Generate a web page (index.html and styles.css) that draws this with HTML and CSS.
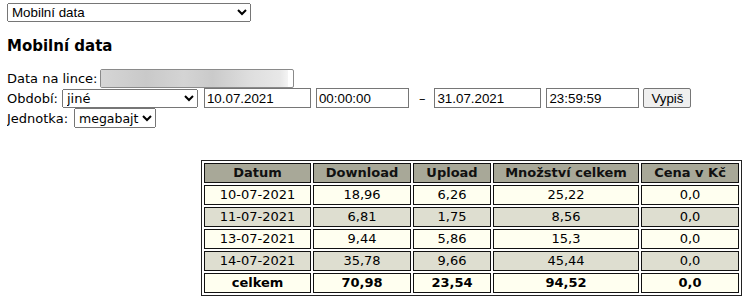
FILE: index.html
```html
<!DOCTYPE html>
<html lang="cs">
<head>
<meta charset="utf-8">
<title>Mobilní data</title>
<link rel="stylesheet" href="styles.css">
</head>
<body>
<select class="nav-select"><option>Mobilní data</option></select>
<h3 class="title">Mobilní data</h3>
<div class="row">
  <span class="label">Data na lince:</span>
  <span class="field-blur"><span class="blur"></span></span>
</div>
<div class="row">
  <span class="label">Období:</span>
  <select class="sel period"><option>jiné</option></select>
  <input class="inp date first" value="10.07.2021">
  <input class="inp time" value="00:00:00">
  <span class="dash">–</span>
  <input class="inp date" value="31.07.2021">
  <input class="inp time" value="23:59:59">
  <button class="btn">Vypiš</button>
</div>
<div class="row">
  <span class="label">Jednotka:</span>
  <select class="sel unit"><option>megabajt</option></select>
</div>
<table class="data">
  <thead>
    <tr><th class="c1">Datum</th><th class="c2">Download</th><th class="c3">Upload</th><th class="c4">Množství celkem</th><th class="c5">Cena v Kč</th></tr>
  </thead>
  <tbody>
    <tr class="odd"><td>10-07-2021</td><td>18,96</td><td>6,26</td><td>25,22</td><td>0,0</td></tr>
    <tr class="even"><td>11-07-2021</td><td>6,81</td><td>1,75</td><td>8,56</td><td>0,0</td></tr>
    <tr class="odd"><td>13-07-2021</td><td>9,44</td><td>5,86</td><td>15,3</td><td>0,0</td></tr>
    <tr class="even"><td>14-07-2021</td><td>35,78</td><td>9,66</td><td>45,44</td><td>0,0</td></tr>
    <tr class="odd total"><td>celkem</td><td>70,98</td><td>23,54</td><td>94,52</td><td>0,0</td></tr>
  </tbody>
</table>
</body>
</html>
```
FILE: styles.css
```css
html, body { background: #fff; }
body {
  margin: 3px 7px 0 7px;
  font-family: "DejaVu Sans", Verdana, sans-serif;
  font-size: 13px;
  color: #000;
}
.nav-select {
  display: block;
  width: 244px;
  height: 19px;
  font-family: "Liberation Sans", Arial, sans-serif;
  font-size: 13.33px;
  margin: 0;
}
.title {
  font-size: 15px;
  line-height: 18px;
  font-weight: bold;
  margin: 15px 0 13px 0;
}
.row {
  display: flex;
  align-items: center;
  height: 20px;
}
.label { margin-right: 4px; white-space: nowrap; }
.field-blur {
  display: block;
  width: 194px;
  height: 19px;
  box-sizing: border-box;
  border: 1px solid #8a8a8a;
  border-radius: 2px;
  background: #fff;
  position: relative;
  overflow: hidden;
  margin-left: -2px;
}
.blur {
  position: absolute;
  left: -2px; top: -2px; bottom: 0; right: 5px;
  background: linear-gradient(to right, #d6d6d6 0%, #c9c9c9 25%, #d4d4d4 45%, #cacaca 60%, #dedede 80%, #e8e8e8 96%, #f4f4f4 100%);
}
.sel {
  font-family: "DejaVu Sans", Verdana, sans-serif;
  font-size: 13px;
  height: 19px;
  margin: 0;
}
.period { width: 136px; }
.unit { width: auto; height: 20px; padding-left: 0; margin-left: 2px; font-size: 12.5px; }
.inp {
  box-sizing: border-box;
  height: 20px;
  border: 1px solid #767676;
  padding: 0 2px;
  font-family: "Liberation Sans", Arial, sans-serif;
  font-size: 13.33px;
  color: #000;
  margin: 0;
}
.date { width: 107px; }
.time { width: 93px; margin-left: 4px; }
.date.first { margin-left: 6px; }
.dash { margin: 0 9px 0 10px; }
.inp.date + .inp.time { margin-left: 5px; }
.btn {
  box-sizing: border-box;
  height: 20px;
  width: 48px;
  margin-left: 4px;
  padding: 0;
  font-family: "Liberation Sans", Arial, sans-serif;
  font-size: 13.33px;
  background: #efefef;
  border: 1px solid #767676;
  border-radius: 2px;
  color: #000;
}
.data {
  margin: 32px 0 0 194px;
  border-collapse: separate;
  border-spacing: 2px;
  border: 1px solid #222;
}
.data th, .data td {
  border: 1px solid #111;
  padding: 1px 2px;
  line-height: 16px;
  height: 16px;
  text-align: center;
  font-size: 13px;
  box-sizing: content-box;
}
.data th { background: #a8a898; font-weight: bold; color: #111; }
.c1 { width: 101px; }
.c2 { width: 92px; }
.c3 { width: 72px; }
.c4 { width: 140px; }
.c5 { width: 92px; }
.odd td { background: #fffff0; }
.even td { background: #deded0; }
.total td { font-weight: bold; }
```
